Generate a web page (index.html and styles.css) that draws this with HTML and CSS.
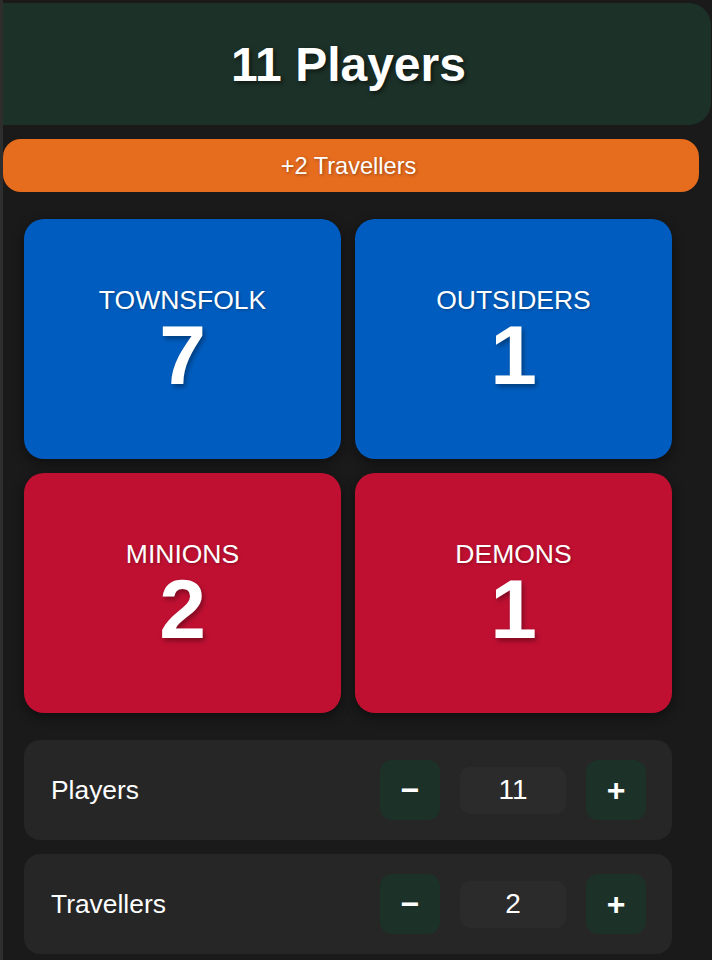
FILE: index.html
```html
<!DOCTYPE html>
<html lang="en">
<head>
<meta charset="utf-8">
<title>11 Players</title>
<link rel="stylesheet" href="styles.css">
</head>
<body>
<div class="frame">
  <header class="title-bar"><h1 class="title">11 Players</h1></header>
  <div class="travellers-bar">+2 Travellers</div>
  <main class="content">
    <section class="roles">
      <div class="role role-good"><span class="role-name">TOWNSFOLK</span><span class="role-count">7</span></div>
      <div class="role role-good"><span class="role-name">OUTSIDERS</span><span class="role-count">1</span></div>
      <div class="role role-evil"><span class="role-name">MINIONS</span><span class="role-count">2</span></div>
      <div class="role role-evil"><span class="role-name">DEMONS</span><span class="role-count">1</span></div>
    </section>
    <section class="controls">
      <div class="control-row">
        <span class="control-label">Players</span>
        <div class="stepper">
          <button class="step-btn" type="button">−</button>
          <span class="step-value">11</span>
          <button class="step-btn" type="button">+</button>
        </div>
      </div>
      <div class="control-row">
        <span class="control-label">Travellers</span>
        <div class="stepper">
          <button class="step-btn" type="button">−</button>
          <span class="step-value">2</span>
          <button class="step-btn" type="button">+</button>
        </div>
      </div>
    </section>
  </main>
</div>
</body>
</html>
```

FILE: styles.css
```css
* { box-sizing: border-box; }

html, body {
  margin: 0;
  padding: 0;
  background: #1a1a1a;
}

body {
  font-family: "Liberation Sans", Arial, sans-serif;
  color: #ffffff;
  overflow: hidden;
}

.frame {
  border-left: 3px solid #2e2e2e;
  min-height: 960px;
  padding-top: 3px;
}

.title-bar {
  width: 708px;
  background: #1c3128;
  border-radius: 0 22px 22px 0;
  padding: 34px 17px 33px 0;
  text-align: center;
}

.title {
  margin: 0;
  font-size: 48px;
  font-weight: 700;
  line-height: normal;
  text-shadow: 2px 2px 4px rgba(0, 0, 0, 0.55);
}

.travellers-bar {
  width: 696px;
  margin-top: 14px;
  background: #e66c1e;
  border-radius: 18px;
  padding: 14px 5px 12px 0;
  text-align: center;
  font-size: 23.6px;
  line-height: normal;
  text-shadow: 1px 1px 3px rgba(0, 0, 0, 0.35);
}

.content {
  width: 648px;
  margin: 27px 0 0 21px;
}

.roles {
  display: grid;
  grid-template-columns: 1fr 1fr;
  grid-auto-rows: 240px;
  gap: 14px;
}

.role {
  display: flex;
  flex-direction: column;
  align-items: center;
  justify-content: center;
  border-radius: 20px;
  padding-top: 4px;
  box-shadow: 0 4px 12px rgba(0, 0, 0, 0.45);
}

.role-good { background: #005dbf; }
.role-evil { background: #c01032; }

.role-name {
  font-size: 26.5px;
  line-height: normal;
  margin-bottom: -3px;
  text-shadow: 1px 1px 3px rgba(0, 0, 0, 0.3);
}

.role-count {
  font-size: 84px;
  font-weight: 700;
  line-height: 1;
  text-shadow: 2px 3px 5px rgba(0, 0, 0, 0.35);
}

.controls {
  margin-top: 27px;
  display: flex;
  flex-direction: column;
  gap: 14px;
}

.control-row {
  height: 100px;
  background: #262626;
  border-radius: 16px;
  display: flex;
  align-items: center;
  padding: 0 26px 0 27px;
}

.control-label {
  flex: 1;
  font-size: 26.4px;
}

.stepper {
  display: flex;
  align-items: center;
  gap: 20px;
}

.step-btn {
  width: 60px;
  height: 60px;
  border: none;
  border-radius: 12px;
  background: #1c3128;
  color: #ffffff;
  font-family: "Liberation Sans", Arial, sans-serif;
  font-size: 32px;
  font-weight: 700;
  line-height: 1;
  padding: 0;
  display: flex;
  align-items: center;
  justify-content: center;
}

.step-value {
  width: 106px;
  height: 47px;
  border-radius: 10px;
  background: #2b2b2b;
  display: flex;
  align-items: center;
  justify-content: center;
  font-size: 28px;
}
```
